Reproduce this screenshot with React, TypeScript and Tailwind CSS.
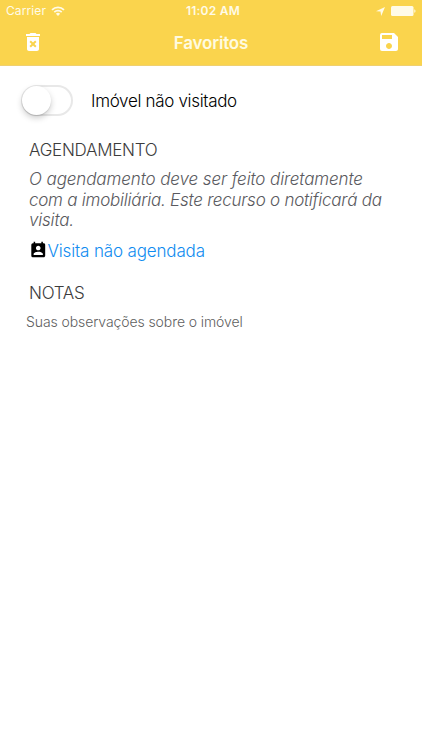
import type { ReactNode } from "react";
import { MdDeleteForever, MdPermContactCalendar, MdSave } from "react-icons/md";

function StatusBar() {
  return (
    <div className="grid h-[22px] grid-cols-[1fr_auto_1fr] items-center px-[6px] text-[#fffbe8]">
      <div className="flex items-center gap-[5px]">
        <span className="text-[12px] leading-[22px] tracking-[0.1px]">Carrier</span>
        <svg width="14" height="10" viewBox="0 0 14 10" fill="none" stroke="currentColor" strokeWidth="1.7">
          <path d="M1 3.8a8.5 8.5 0 0 1 12 0" />
          <path d="M3.3 6.1a5.2 5.2 0 0 1 7.4 0" />
          <path d="M4.9 7.8a3 3 0 0 1 4.2 0L7 9.9z" fill="currentColor" stroke="none" />
        </svg>
      </div>
      <span className="pl-[4px] text-[12px] font-semibold leading-[22px] tracking-[0.25px]">11:02 AM</span>
      <div className="flex items-center justify-end gap-[6px]">
        <svg width="9" height="9" viewBox="0 0 8 8" fill="currentColor">
          <path d="M8 0 4.6 8 4 4 0 3.7z" />
        </svg>
        <svg width="25" height="10" viewBox="0 0 25 10" fill="currentColor">
          <rect width="22.5" height="10" rx="1.5" />
          <path d="M23.3 3.2c1.6.4 1.6 3.2 0 3.6z" />
        </svg>
      </div>
    </div>
  );
}

function SectionTitle({ children }: { children: ReactNode }) {
  return <h2 className="text-[17px] font-light leading-[22px] tracking-[-0.27px] text-[#3c3c3c]">{children}</h2>;
}

export default function App() {
  return (
    <main className="min-h-screen bg-white font-['Inter',sans-serif] whitespace-nowrap">
      <header className="h-[66px] border-b border-[#efd070] bg-[#fad44d]">
        <StatusBar />
        <div className="grid h-[40px] grid-cols-[1fr_auto_1fr] items-center px-[21px] text-white">
          <button aria-label="Excluir" className="justify-self-start">
            <MdDeleteForever size={24} />
          </button>
          <h1 className="pt-[2px] text-[17px] font-semibold leading-[22px] tracking-[-0.2px] text-[#fffbe0]">
            Favoritos
          </h1>
          <button aria-label="Salvar" className="justify-self-end">
            <MdSave size={24} />
          </button>
        </div>
      </header>

      <div className="flex items-center pl-[21px] pt-[19px]">
        <button
          role="switch"
          aria-checked="false"
          aria-label="Imóvel visitado"
          className="h-[31px] w-[52px] rounded-full border-2 border-[#e8e8e8] bg-white"
        >
          <span className="-ml-px -mt-px block size-[29px] rounded-full bg-white shadow-[0_3px_6px_rgba(0,0,0,0.2),0_1px_1px_rgba(0,0,0,0.1)]" />
        </button>
        <span className="ml-[18px] text-[17px] font-light leading-[22px] tracking-[-0.32px] text-black">
          Imóvel não visitado
        </span>
      </div>

      <section className="pl-[29px] pt-[23px]">
        <SectionTitle>AGENDAMENTO</SectionTitle>
        <p className="mt-[8px] text-[17px] font-light italic leading-[20.5px] text-[#5a5a60]">
          <span className="block tracking-[-0.1px]">O agendamento deve ser feito diretamente</span>
          <span className="block tracking-[-0.24px]">com a imobiliária. Este recurso o notificará da</span>
          <span className="block tracking-[-0.2px]">visita.</span>
        </p>
        <div className="mt-[9px] flex h-[22px] items-center">
          <MdPermContactCalendar size={18.5} className="text-black" />
          <a className="text-[17px] font-light leading-[22px] tracking-[-0.15px] text-[#108cf0]">Visita não agendada</a>
        </div>
      </section>

      <section className="pl-[29px] pt-[20px]">
        <SectionTitle>NOTAS</SectionTitle>
        <p className="-ml-[3px] mt-[8px] text-[14px] font-light leading-[20px] tracking-[-0.09px] text-[#606060]">
          Suas observações sobre o imóvel
        </p>
      </section>
    </main>
  );
}
